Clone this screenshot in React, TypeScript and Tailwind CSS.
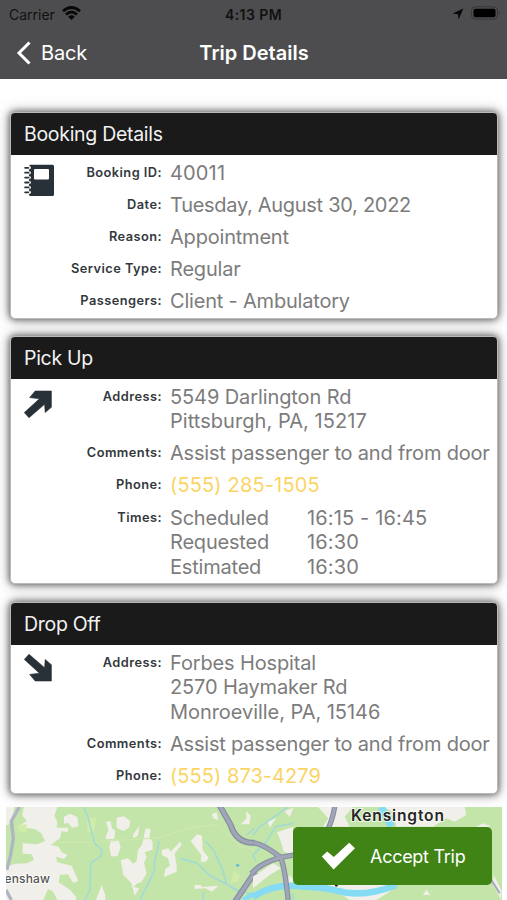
import type { ReactNode } from "react";

function Card({ title, icon, className, children }: { title: string; icon: ReactNode; className: string; children: ReactNode }) {
  return (
    <section className={`ml-[10px] mr-[9px] flex shrink-0 flex-col rounded-[5px] border border-[#b9b9b9] bg-white shadow-[0_0_6px_1px_rgba(0,0,0,0.5),0_0_14px_1px_rgba(0,0,0,0.28)] ${className}`}>
      <h2 className="flex h-[42px] shrink-0 items-center rounded-t-[4px] bg-[#1a1a1a] pl-[13px] text-[19.5px] leading-6 tracking-[-0.3px] text-[#f2f2f2]">
        {title}
      </h2>
      <div className="flex">
        <div className="w-[50px] shrink-0">{icon}</div>
        <div className="flex flex-1 flex-col gap-[7.5px] pt-[5.7px]">{children}</div>
      </div>
    </section>
  );
}

function Row({ label, spacing = "tracking-[-0.2px]", children }: { label: string; spacing?: string; children: ReactNode }) {
  return (
    <div className="flex whitespace-nowrap">
      <div className="w-[101px] shrink-0 text-right text-[12.8px] font-semibold leading-[23px] tracking-[0.45px] text-[#33383d]">{label}:</div>
      <div className={`ml-2 text-[20px] leading-[24.6px] text-[#7c7c7c] ${spacing}`}>{children}</div>
    </div>
  );
}

function Time({ name, value }: { name: string; value: string }) {
  return (
    <div className="flex">
      <span className="w-[137px]">{name}</span>
      <span className="tracking-[0.15px]">{value}</span>
    </div>
  );
}

const Phone = ({ children }: { children: string }) => <span className="text-[#fbd466]">{children}</span>;

function Notebook() {
  return (
    <svg className="ml-[13px] mt-[9px] h-[33px] w-[31px]" viewBox="0 0 31 33" fill="#283038">
      <path fillRule="evenodd" d="M6.5 .7H28.5Q30 .7 30 2.2V30.6Q30 32.1 28.5 32.1H6.5Q5 32.1 5 30.6V2.2Q5 .7 6.5 .7ZM11 5Q10 5 10 6V14.6Q10 15.6 11 15.6H24Q25 15.6 25 14.6V6Q25 5 24 5Z" />
      {[3.8, 8.7, 13.6, 18.5, 23.4, 28.3].map((y) => (
        <g key={y}>
          <rect x="-.5" y={y - 1.7} width="7.4" height="3.4" rx="1.7" fill="#fff" />
          <rect x=".2" y={y - 0.9} width="5" height="1.8" rx=".9" />
        </g>
      ))}
      <path d="M4.9 4.8H5.8V28H4.9Z" opacity=".35" />
    </svg>
  );
}

function Arrow({ down }: { down?: boolean }) {
  return (
    <svg className={down ? "ml-[13px] mt-[9px] h-[28px] w-[28px] -scale-y-100" : "ml-[13px] mt-[11px] h-[28px] w-[28px]"} viewBox="0 0 28 28" fill="#283038">
      <path d="M11.2 1H27.4V17.2L21.2 22.6L20.6 14.3L5 27.8L.3 22.6L15.4 8.8L5.6 7.6Z" stroke="#283038" strokeWidth=".6" strokeLinejoin="round" />
    </svg>
  );
}

function MapView() {
  return (
    <svg className="h-[93px] w-[496px]" viewBox="6 807 496 93">
      <rect x="6" y="807" width="496" height="93" fill="#c3e5a9" />
      <g transform="translate(0 795) scale(.3333)">
        <g fill="#f1efe9">
          <path d="M18 36H44L36 70L25 90H18ZM72 36H172L163 62L172 80L170 98H205L203 112L185 108L180 130L152 150L176 155L185 172L203 180L192 192L168 185L172 202L215 212L235 258L220 264L204 238L180 240L176 262L210 284L228 305V315H172L160 290L144 282L130 315H18V215L45 206L80 205L102 195L95 178L68 176V145L112 148L135 138L124 115L105 102L52 95L80 78L66 60Z" />
          <path d="M192 65L210 56L232 66L236 94L216 98L205 84L192 86ZM318 80L332 78L336 100L346 108L342 132H316L325 104ZM350 68L372 64L391 78L388 98L370 108L350 98ZM332 136L356 134L362 158L352 184L334 184L328 158ZM400 118L418 92L414 122L400 130ZM437 100L452 103L448 130L458 140L458 164L434 172L440 186L432 204L440 235L424 262L412 265L400 276L418 280L404 302L394 264L370 240L362 195L384 190L400 206L410 198L414 164L426 150ZM486 165L505 160L512 170L540 140L546 148L524 176L530 212V230L492 246L496 222L510 212L504 190L486 180ZM572 138L592 118L606 122L608 166L626 188L618 200H602L604 180ZM584 270H602L606 276L655 272L636 290L616 280L584 282ZM305 270L316 300V315H288ZM635 58L650 52L655 76L640 70ZM738 48L752 62L748 88L722 88L740 70Z" />
        </g>
        <path d="M52 90L80 88V110H58ZM262 68L290 70L282 110H262ZM700 228L720 238L714 260L692 264Z" fill="#d1eba8" />
        <g fill="none" stroke="#cde8ac" strokeWidth="4"><path d="M176 142L300 140L480 128L580 96L650 90M655 90L720 155L762 165" /></g>
        <g fill="none" stroke="#a3dbd2" strokeWidth="5">
          <path d="M250 36L262 60L284 145L306 165L302 184L272 204L270 285L255 315M478 138L464 200L462 230L420 315M540 190L590 204L628 240L710 284L762 300M616 138L640 164L666 220L680 268L715 290M610 290V315M740 120L762 100" />
        </g>
        <path d="M58 36L34 78L40 130L32 180L20 225M18 285L34 315" fill="none" stroke="#afb5c4" strokeWidth="10" />
        <g fill="none" strokeLinejoin="round">
          <path d="M658 30L692 90Q710 146 764 143M705 320L766 230" stroke="#858ca2" strokeWidth="18" />
          <path d="M658 30L692 90Q710 146 764 143M705 320L766 230" stroke="#a0a6b8" strokeWidth="11" />
        </g>
        <path d="M730 315L762 296" stroke="#85dcf3" strokeWidth="14" />
        <circle cx="713" cy="211" r="5" fill="#68bed3" />
      </g>
      <g transform="translate(253 795) scale(.3333)">
        <g fill="#f1efe9">
          <path d="M72 112L120 95V178L92 170L82 135ZM45 80L70 68L50 98ZM94 48L122 38L110 66ZM195 36H300L275 65L290 95H210L226 70ZM390 36H635L640 60L605 80L580 70L540 95H430L420 50ZM135 265H430L410 290L370 315H290L240 280ZM0 245L60 205L84 220L50 240L0 280ZM510 300L520 284L532 300ZM670 95L690 85L710 92L705 110ZM722 240L745 285V315L720 270ZM110 240L140 275L100 265Z" />
        </g>
        <g fill="none" stroke="#a3dbd2" strokeWidth="5"><path d="M0 120L20 95L72 60L105 36M10 200L0 180L40 140L68 95L120 85M120 295L122 315" /></g>
        <path d="M385 36L415 95" stroke="#86dbf4" strokeWidth="22" />
        <path d="M0 306Q60 265 145 274Q220 277 250 287Q330 310 430 270" fill="none" stroke="#86dbf4" strokeWidth="20" />
        <g fill="none" strokeLinejoin="round">
          <path d="M-2 143Q30 146 83 187L125 180M-5 236Q20 205 83 187Q96 220 106 320M246 30Q240 70 226 100" stroke="#858ca2" strokeWidth="16" />
          <path d="M-2 143Q30 146 83 187L125 180M-5 236Q20 205 83 187Q96 220 106 320M246 30Q240 70 226 100" stroke="#a0a6b8" strokeWidth="10" />
        </g>
        <path d="M715 255L740 295" stroke="#a3a8bb" strokeWidth="6" />
        <circle cx="250" cy="271" r="4" fill="#222" />
      </g>
      <g stroke="#fff" strokeOpacity=".75" strokeWidth="2" paintOrder="stroke" fontFamily="Inter, sans-serif">
        <text x="4.5" y="882.5" fontSize="12" fontWeight="500" fill="#555" textLength="45.5">enshaw</text>
        <text x="351" y="820.8" fontSize="15.6" fontWeight="600" fill="#262626" textLength="93">Kensington</text>
      </g>
    </svg>
  );
}

export default function App() {
  return (
    <main className="relative flex h-[900px] w-[507px] flex-col overflow-hidden bg-white font-['Inter',sans-serif]">
      <header className="h-[79px] shrink-0 bg-[#4d4d4f]">
        <div className="grid h-7 grid-cols-3 items-center text-[#111]">
          <div className="flex items-center gap-[7px] pl-[9px] text-[14px]">
            Carrier
            <svg className="-mt-[2px] h-[14px] w-[19px]" viewBox="0 0 19 14" fill="none" stroke="#080808" strokeWidth="2.7">
              <path d="M1 5.2Q9.5 -2.2 18 5.2M4 8.4Q9.5 3.6 15 8.4" />
              <path d="M6.2 10.7Q9.5 8 12.8 10.7L9.5 14Z" fill="#080808" stroke="none" />
            </svg>
          </div>
          <div className="text-center text-[14px] font-semibold tracking-[0.45px]">4:13 PM</div>
          <div className="flex items-center justify-end gap-[7px] pr-[6px]">
            <svg className="h-[12px] w-[12px]" viewBox="0 0 12 12" fill="#080808"><path d="M11.3.6L6.6 11.5L6 6.2L.6 5.5Z" /></svg>
            <svg className="-mt-[2px] h-[14px] w-[30px]" viewBox="0 0 30 14">
              <rect x=".5" y=".8" width="26" height="12.4" rx="3.8" fill="none" stroke="#363638" />
              <rect x="2.5" y="2.8" width="22" height="8.4" rx="2" fill="#000" />
              <path d="M28 5Q29.7 7 28 9Z" fill="#303032" />
            </svg>
          </div>
        </div>
        <div className="grid h-12 grid-cols-[1fr_auto_1fr] items-center pt-px text-[20px] text-white">
          <div className="flex items-center gap-[10px] pl-4 tracking-[-0.2px]">
            <svg className="h-6 w-[15px]" viewBox="0 0 15 24" fill="none" stroke="#fff" strokeWidth="3"><path d="M13.5 1.5L3 12L13.5 22.5" /></svg>
            Back
          </div>
          <h1 className="pl-px font-semibold">Trip Details</h1>
        </div>
      </header>

      <Card title="Booking Details" icon={<Notebook />} className="mt-[33px] h-[207px]">
        <Row label="Booking ID" spacing="tracking-[0.15px]">40011</Row>
        <Row label="Date" spacing="tracking-[-0.29px]">Tuesday, August 30, 2022</Row>
        <Row label="Reason">Appointment</Row>
        <Row label="Service Type">Regular</Row>
        <Row label="Passengers">Client - Ambulatory</Row>
      </Card>

      <Card title="Pick Up" icon={<Arrow />} className="mt-[17px] h-[248px]">
        <Row label="Address" spacing="tracking-[-0.1px]">5549 Darlington Rd<br /><span className="tracking-[0.05px]">Pittsburgh, PA, 15217</span></Row>
        <Row label="Comments">Assist passenger to and from door</Row>
        <Row label="Phone" spacing="tracking-[0.15px]"><Phone>(555) 285-1505</Phone></Row>
        <Row label="Times">
          <Time name="Scheduled" value="16:15 - 16:45" />
          <Time name="Requested" value="16:30" />
          <Time name="Estimated" value="16:30" />
        </Row>
      </Card>

      <Card title="Drop Off" icon={<Arrow down />} className="mt-[18px] h-[192px]">
        <Row label="Address" spacing="tracking-[-0.14px]">Forbes Hospital<br />2570 Haymaker Rd<br /><span className="tracking-[-0.05px]">Monroeville, PA, 15146</span></Row>
        <Row label="Comments">Assist passenger to and from door</Row>
        <Row label="Phone" spacing="tracking-[0.05px]"><Phone>(555) 873-4279</Phone></Row>
      </Card>

      <div className="ml-[6px] mt-[13px] h-[93px] shrink-0">
        <MapView />
      </div>
      <button className="absolute bottom-[15px] right-[15px] flex h-[58px] w-[199px] items-center gap-[15px] rounded-[5px] bg-[#408415] pl-[28px] text-[18px] tracking-[-0.28px] text-white">
        <svg className="h-[28px] w-[34px]" viewBox="0 0 34 28" fill="#fff"><path d="M.8 14.5L6.2 9.6L12.8 15L28.2 .8L34 6.2L12.6 27.4Z" /></svg>
        Accept Trip
      </button>
    </main>
  );
}
